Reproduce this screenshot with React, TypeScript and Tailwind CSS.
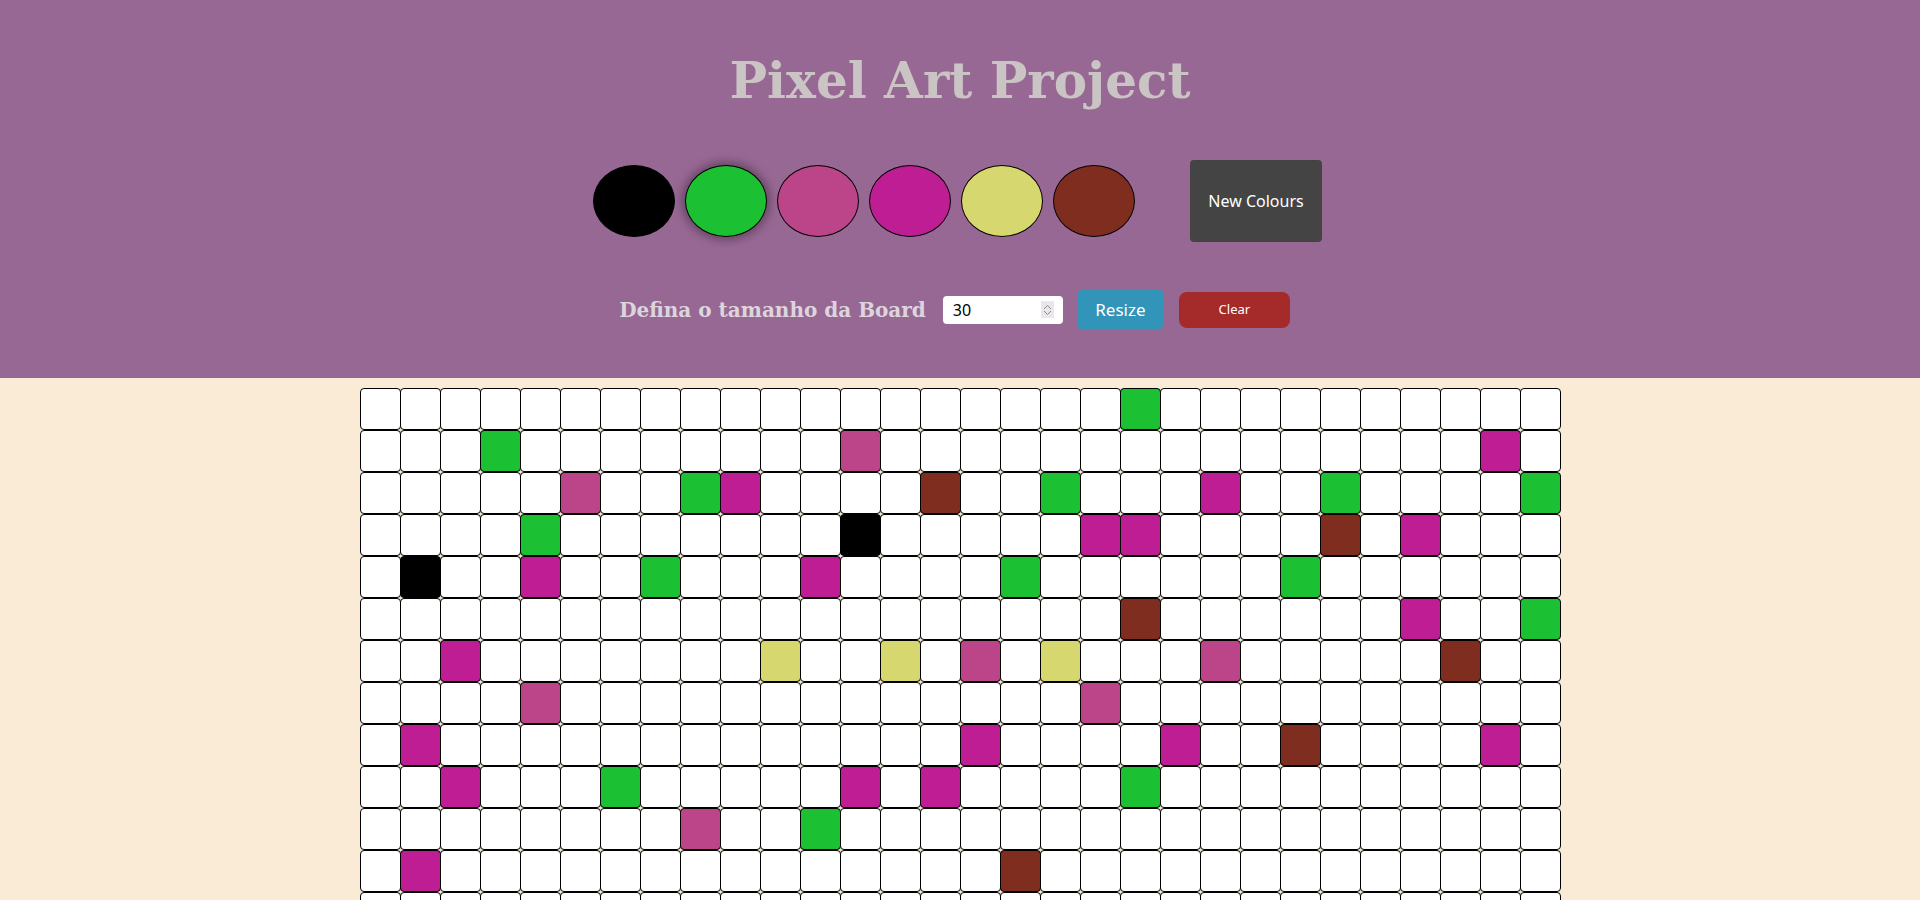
import React from "react";

type Swatch = "K" | "G" | "R" | "M" | "Y" | "B" | "W";

const swatchBg: Record<Swatch, string> = {
  K: "bg-black",
  G: "bg-[#1bc132]",
  R: "bg-[#bc4488]",
  M: "bg-[#bf1d93]",
  Y: "bg-[#d6d76e]",
  B: "bg-[#7f2d1f]",
  W: "bg-white",
};

// painted pixels, row -> { col: colour }
const painted: Record<number, Record<number, Swatch>> = {
  0: { 19: "G" },
  1: { 3: "G", 12: "R", 28: "M" },
  2: { 5: "R", 8: "G", 9: "M", 14: "B", 17: "G", 21: "M", 24: "G", 29: "G" },
  3: { 4: "G", 12: "K", 18: "M", 19: "M", 24: "B", 26: "M" },
  4: { 1: "K", 4: "M", 7: "G", 11: "M", 16: "G", 23: "G" },
  5: { 19: "B", 26: "M", 29: "G" },
  6: { 2: "M", 10: "Y", 13: "Y", 15: "R", 17: "Y", 21: "R", 27: "B" },
  7: { 4: "R", 18: "R" },
  8: { 1: "M", 15: "M", 20: "M", 23: "B", 28: "M" },
  9: { 2: "M", 6: "G", 12: "M", 14: "M", 19: "G" },
  10: { 8: "R", 11: "G" },
  11: { 1: "M", 16: "B" },
};

const palette: { colour: Swatch; selected?: boolean }[] = [
  { colour: "K" },
  { colour: "G", selected: true },
  { colour: "R" },
  { colour: "M" },
  { colour: "Y" },
  { colour: "B" },
];

const SIZE = 30;

function Spinner() {
  return (
    <div className="flex h-[17px] w-[15px] flex-col items-center justify-center bg-[#e9e7ec]">
      <svg width="9" height="6" viewBox="0 0 9 6" fill="none">
        <path d="M1 5 L4.5 1.5 L8 5" stroke="#8a8a8a" strokeWidth="1" />
      </svg>
      <svg width="9" height="6" viewBox="0 0 9 6" fill="none">
        <path d="M1 1 L4.5 4.5 L8 1" stroke="#8a8a8a" strokeWidth="1" />
      </svg>
    </div>
  );
}

export default function App() {
  const rows = Array.from({ length: SIZE }, (_, r) => r);
  const cols = Array.from({ length: SIZE }, (_, c) => c);

  return (
    <div className="min-h-screen bg-[#faebd7]">
      <header className="flex h-[378px] flex-col items-center bg-[#976894]">
        <h1
          className="mt-[56px] text-[50px] font-bold leading-none text-[#cac4c4]"
          style={{ fontFamily: '"DejaVu Serif", serif' }}
        >
          Pixel Art Project
        </h1>

        <div className="mt-[54px] flex items-center pr-[5px]">
          <div className="flex items-center gap-[10px]">
            {palette.map((p, i) => (
              <div
                key={i}
                className={
                  "h-[72px] w-[82px] rounded-[50%] border border-black " +
                  swatchBg[p.colour] +
                  (p.selected ? " shadow-[0_0_10px_3px_rgba(0,0,0,0.35)]" : "")
                }
              />
            ))}
          </div>
          <button
            className="ml-[55px] h-[82px] w-[132px] rounded-[4px] bg-[#444444] text-[16px] text-white"
            style={{ fontFamily: '"Noto Sans", sans-serif' }}
          >
            New Colours
          </button>
        </div>

        <div className="mt-[48px] flex items-center pr-[11px]">
          <label
            className="text-[20px] font-bold text-[#ddd5dc]"
            style={{ fontFamily: '"DejaVu Serif", serif' }}
          >
            Defina o tamanho da Board
          </label>
          <div className="ml-[17px] flex h-[28px] w-[120px] items-center rounded-[4px] bg-white pl-[10px] pr-[9px]">
            <input
              type="text"
              readOnly
              value="30"
              className="w-full bg-transparent text-[16px] text-black outline-none"
              style={{ fontFamily: '"Noto Sans", sans-serif' }}
            />
            <Spinner />
          </div>
          <button
            className="ml-[15px] h-[39px] w-[85px] rounded-[4px] bg-[#3194b8] text-[17px] text-white"
            style={{ fontFamily: '"Noto Sans", sans-serif' }}
          >
            Resize
          </button>
          <button
            className="ml-[16px] h-[36px] w-[111px] rounded-[8px] bg-[#a52a2a] text-[13px] text-white"
            style={{ fontFamily: '"Noto Sans", sans-serif' }}
          >
            Clear
          </button>
        </div>
      </header>

      <main className="mx-auto flex w-[1200px] flex-col pt-[10px]">
        {rows.map((r) => (
          <div key={r} className="flex pl-px">
            {cols.map((c) => {
              const colour: Swatch = painted[r]?.[c] ?? "W";
              return (
                <div
                  key={c}
                  className={
                    "-ml-px h-[42px] w-[41px] shrink-0 rounded-[4px] border border-black " +
                    swatchBg[colour]
                  }
                />
              );
            })}
          </div>
        ))}
      </main>
    </div>
  );
}
